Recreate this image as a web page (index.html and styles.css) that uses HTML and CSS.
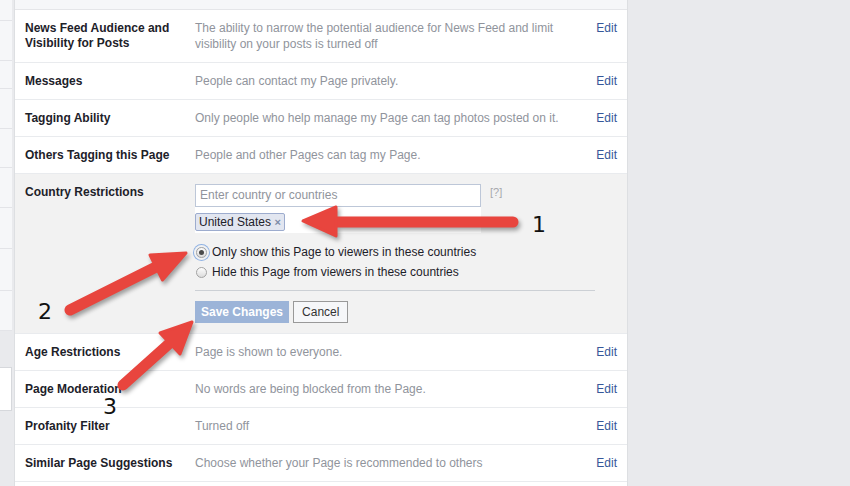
FILE: index.html
```html
<!DOCTYPE html>
<html lang="en">

<head>
    <meta charset="UTF-8">
    <title>Page Settings</title>
    <link rel="stylesheet" href="styles.css">
</head>

<body>

    <div class="page">
        <div class="side-strip">
            <div class="side-item" style="height: 20px"></div>
            <div class="side-item" style="height: 39px"></div>
            <div class="side-item" style="height: 27px"></div>
            <div class="side-item" style="height: 39px"></div>
            <div class="side-item" style="height: 38px"></div>
            <div class="side-item" style="height: 39px"></div>
            <div class="side-item" style="height: 40px"></div>
            <div class="side-item" style="height: 41px"></div>
            <div class="side-item" style="height: 39px"></div>
            <div class="side-gap"></div>
            <div class="side-box"></div>
        </div>

        <div class="settings">
            <div class="settings-top"></div>

            <div class="row">
                <div class="label">News Feed Audience and Visibility for Posts</div>
                <div class="desc">The ability to narrow the potential audience for News Feed and limit visibility on your posts is turned off</div>
                <a class="edit">Edit</a>
            </div>
            <div class="row">
                <div class="label">Messages</div>
                <div class="desc">People can contact my Page privately.</div>
                <a class="edit">Edit</a>
            </div>
            <div class="row">
                <div class="label">Tagging Ability</div>
                <div class="desc">Only people who help manage my Page can tag photos posted on it.</div>
                <a class="edit">Edit</a>
            </div>
            <div class="row">
                <div class="label">Others Tagging this Page</div>
                <div class="desc">People and other Pages can tag my Page.</div>
                <a class="edit">Edit</a>
            </div>

            <div class="row open">
                <div class="label">Country Restrictions</div>
                <div class="editor">
                    <div class="country-line">
                        <div class="country-box">
                            <div class="country-input">Enter country or countries</div>
                            <div class="tokens">
                                <span class="token">United States <span class="token-x">&times;</span></span>
                            </div>
                        </div>
                        <span class="help">[?]</span>
                    </div>
                    <div class="choice">
                        <span class="radio checked"></span>
                        Only show this Page to viewers in these countries
                    </div>
                    <div class="choice">
                        <span class="radio"></span>
                        Hide this Page from viewers in these countries
                    </div>
                    <div class="actions">
                        <button class="btn-save">Save Changes</button>
                        <button class="btn-cancel">Cancel</button>
                    </div>
                </div>
            </div>

            <div class="row">
                <div class="label">Age Restrictions</div>
                <div class="desc">Page is shown to everyone.</div>
                <a class="edit">Edit</a>
            </div>
            <div class="row">
                <div class="label">Page Moderation</div>
                <div class="desc">No words are being blocked from the Page.</div>
                <a class="edit">Edit</a>
            </div>
            <div class="row">
                <div class="label">Profanity Filter</div>
                <div class="desc">Turned off</div>
                <a class="edit">Edit</a>
            </div>
            <div class="row">
                <div class="label">Similar Page Suggestions</div>
                <div class="desc">Choose whether your Page is recommended to others</div>
                <a class="edit">Edit</a>
            </div>
            <div class="row">
                <div class="label">&nbsp;</div>
                <div class="desc"></div>
            </div>
        </div>
    </div>

    <!-- red annotation arrows drawn over the screenshot -->
    <svg class="notes" width="850" height="486" viewBox="0 0 850 486">
        <g class="arrow">
            <line x1="513" y1="222" x2="333" y2="222" stroke-width="11" />
            <polygon points="303,221 336,207 336,236" />
        </g>
        <g class="arrow">
            <line x1="70" y1="310" x2="158" y2="266" stroke-width="11" />
            <polygon points="186,253 162.5,280 150,255" />
        </g>
        <g class="arrow">
            <line x1="123" y1="385" x2="171" y2="342" stroke-width="11" />
            <polygon points="192,322 180,354 160,333" />
        </g>
        <text class="num" x="532" y="232">1</text>
        <text class="num" x="38" y="319">2</text>
        <text class="num" x="103" y="414">3</text>
    </svg>

</body>

</html>
```

FILE: styles.css
```css
body,
html {
    margin: 0;
    background-color: #e9eaed;
    font-family: "Liberation Sans", Arial, sans-serif;
    font-size: 12px;
    color: #1d2129;
}

body {
    position: relative;
    width: 850px;
    height: 486px;
    overflow: hidden;
}

.page {
    display: flex;
    align-items: flex-start;
}

.side-strip {
    width: 12px;
    margin-right: 2px;
    display: flex;
    flex-direction: column;
}

.side-item {
    background-color: #f6f7f9;
    border-bottom: 1px solid #e3e4e8;
}

.side-gap {
    height: 36px;
}

.side-box {
    height: 42px;
    background-color: #fff;
    border: 1px solid #d6d8dc;
    border-left: none;
}

.settings {
    width: 612px;
    background-color: #fff;
    border-left: 1px solid #dddfe2;
    border-right: 1px solid #dddfe2;
}

.settings-top {
    height: 9px;
    background-color: #f6f7f9;
    border-bottom: 1px solid #e5e6e9;
}

.row {
    display: flex;
    padding: 10px;
    line-height: 16px;
    border-bottom: 1px solid #e9ebee;
}

.row.open {
    background-color: #f2f2f2;
}

.label {
    width: 170px;
    flex-shrink: 0;
    font-weight: bold;
    line-height: 15px;
    padding-top: 1px;
    padding-right: 20px;
    box-sizing: border-box;
}

.desc {
    flex: 1;
    color: #90949c;
    padding-right: 20px;
}

.edit {
    color: #365899;
    cursor: pointer;
}

.editor {
    width: 400px;
}

.country-line {
    display: flex;
    align-items: flex-start;
}

.country-box {
    width: 286px;
}

.country-input {
    height: 21px;
    line-height: 21px;
    padding-left: 4px;
    background-color: #fff;
    border: 1px solid #bdc7d8;
    color: #90949c;
}

.tokens {
    height: 26px;
    background-color: #fff;
    padding-top: 6px;
    box-sizing: border-box;
}

.token {
    display: inline-block;
    height: 16px;
    line-height: 16px;
    padding: 0 3px 0 3px;
    background-color: #e2e6f0;
    border: 1px solid #9dacce;
    border-radius: 2px;
    color: #1d2129;
}

.token-x {
    color: #7d8ba8;
    font-size: 11px;
    font-weight: bold;
}

.help {
    margin-left: 9px;
    color: #a6a8ad;
    font-size: 11px;
}

.choice {
    display: flex;
    align-items: center;
    height: 16px;
    margin-top: 4px;
    color: #1d2129;
}

.country-line + .choice {
    margin-top: 11px;
}

.radio {
    width: 11px;
    height: 11px;
    margin: 0 5px 0 1px;
    border: 1px solid #a3a3a3;
    border-radius: 50%;
    background: linear-gradient(#fdfdfd, #dcdcdc);
    box-sizing: border-box;
    position: relative;
}

.radio.checked {
    box-shadow: 0 0 0 2px #f2f2f2, 0 0 0 3px #8fb2e4;
}

.radio.checked::after {
    content: "";
    position: absolute;
    left: 2px;
    top: 2px;
    width: 5px;
    height: 5px;
    border-radius: 50%;
    background-color: #4a4a4a;
}

.actions {
    margin-top: 10px;
    padding-top: 10px;
    border-top: 1px solid #ccd0d5;
    display: flex;
    gap: 4px;
}

.btn-save,
.btn-cancel {
    height: 22px;
    padding: 0 5px;
    font-family: "Liberation Sans", Arial, sans-serif;
    font-size: 12px;
    font-weight: bold;
    border-radius: 0;
    white-space: nowrap;
}

.btn-save {
    background-color: #9cb4d8;
    border: 1px solid #9cb4d8;
    color: #fff;
}

.btn-cancel {
    padding: 0 8px;
    background-color: #f6f7f9;
    border: 1px solid #999;
    color: #333;
    font-weight: normal;
}

.notes {
    position: absolute;
    left: 0;
    top: 0;
    pointer-events: none;
}

.arrow {
    fill: #e8453e;
    stroke: #e8453e;
    stroke-linecap: round;
    stroke-linejoin: round;
    filter: drop-shadow(2px 3px 2px rgba(0, 0, 0, 0.35));
}

.arrow polygon {
    stroke-width: 3;
}

.num {
    font-family: "DejaVu Sans", sans-serif;
    font-size: 22px;
    fill: #111;
}
```
